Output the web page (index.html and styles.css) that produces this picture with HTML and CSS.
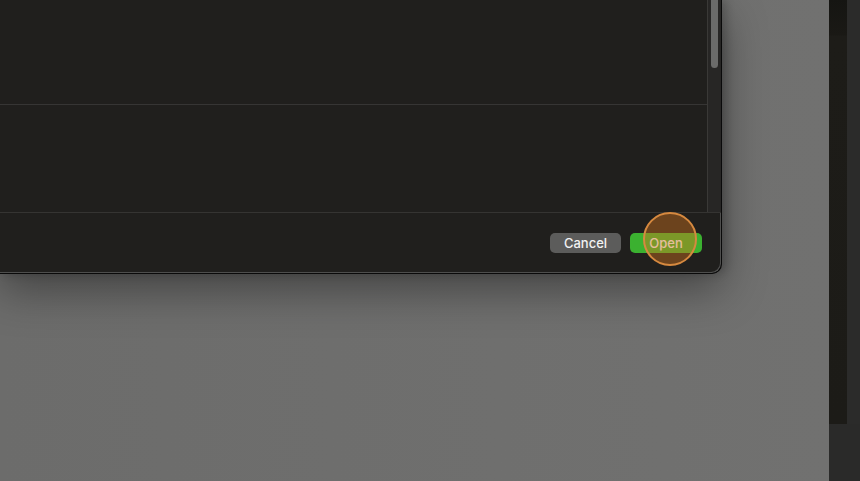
FILE: index.html
```html
<!DOCTYPE html>
<html lang="en">
    <head>
        <meta charset="UTF-8">
        <title>Open</title>
        <link rel="stylesheet" href="styles.css">
    </head>
    <body>
        <div class="screen">
            <div class="stage">
                <div class="dialog">
                    <div class="browser">
                        <div class="list">
                            <div class="row"></div>
                            <div class="row last"></div>
                        </div>
                        <div class="track"><div class="thumb"></div></div>
                    </div>
                    <div class="footer">
                        <button class="btn cancel">Cancel</button>
                        <button class="btn open">Open<span class="click"></span></button>
                    </div>
                </div>
            </div>
            <div class="side">
                <div class="side-top">
                    <div class="dark"></div>
                    <div class="edge"></div>
                </div>
                <div class="side-bottom"></div>
            </div>
        </div>
    </body>
</html>
```

FILE: styles.css
```css
body{
    margin: 0;
    background-color: #6f6f6e;
    font-family: Inter, "Liberation Sans", sans-serif;
    overflow: hidden;
}
.screen{
    display: flex;
    width: 860px;
    height: 481px;
}
.stage{
    width: 829px;
    background: linear-gradient(90deg, #6c6c6b 0%, #717170 100%);
}
.dialog{
    width: 722px;
    height: 274px;
    box-sizing: border-box;
    background-color: #201f1d;
    border-right: 1px solid #0a0a0a;
    border-bottom: 1px solid #0a0a0a;
    border-bottom-right-radius: 10px;
    box-shadow: inset -1px -1px 0 #4e4e4d, 0 16px 44px rgba(0,0,0,0.38), 4px 0 10px rgba(0,0,0,0.2);
    display: flex;
    flex-direction: column;
}
.browser{
    display: flex;
    height: 212px;
    border-bottom: 1px solid #353432;
}
.list{
    width: 707px;
    display: flex;
    flex-direction: column;
}
.row{
    height: 104px;
    border-bottom: 1px solid #363534;
}
.row.last{
    border-bottom: none;
    flex: 1;
}
.track{
    width: 13px;
    border-left: 1px solid #3a3937;
    background-color: #272625;
    display: flex;
    justify-content: center;
}
.thumb{
    width: 7px;
    height: 72px;
    margin-top: -4px;
    border-radius: 4px;
    background-color: #6b6b6a;
}
.footer{
    flex: 1;
    display: flex;
    justify-content: flex-end;
    align-items: flex-start;
    gap: 9px;
    padding: 20px 19px 0 0;
}
.btn{
    height: 20px;
    width: 72px;
    border: none;
    border-radius: 5px;
    font-family: inherit;
    font-size: 13px;
    font-weight: 500;
    color: #f2f2f2;
    padding: 0;
    line-height: 19px;
}
.btn.cancel{
    width: 71px;
    background-color: #5c5c5b;
}
.btn.open{
    position: relative;
    background-color: #3bb130;
}
.click{
    position: absolute;
    left: 13px;
    top: -21px;
    width: 50px;
    height: 50px;
    border-radius: 50%;
    border: 2px solid #d6893f;
    background-color: rgba(214, 116, 30, 0.42);
}
.side{
    width: 31px;
    display: flex;
    flex-direction: column;
}
.side-top{
    height: 424px;
    display: flex;
}
.dark{
    width: 18px;
    background: linear-gradient(180deg, #151512 0px, #1a1915 35px, #1d1c18 36px, #1c1b17 100%);
}
.edge{
    flex: 1;
    background-color: #2b2b2a;
}
.side-bottom{
    flex: 1;
    background-color: #2a2a29;
}
```
